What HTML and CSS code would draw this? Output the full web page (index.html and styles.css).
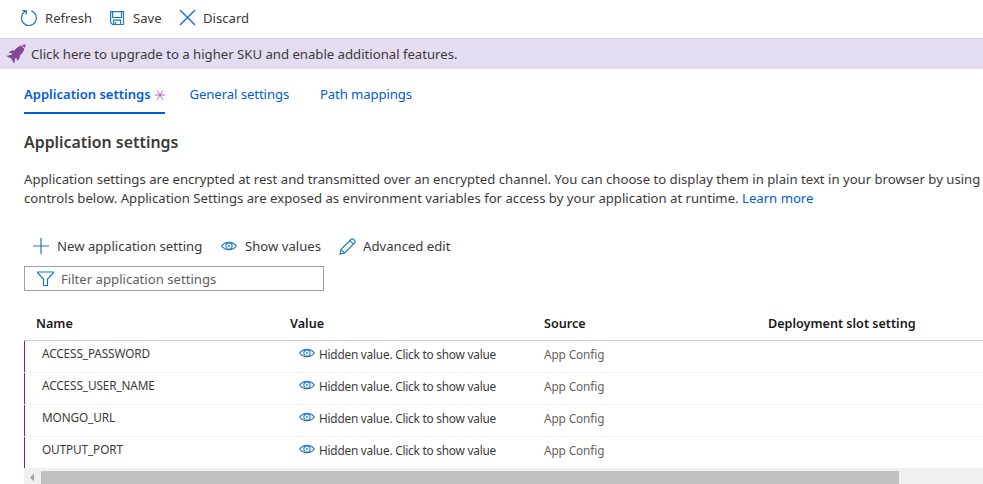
FILE: index.html
```
<!DOCTYPE html>
<html lang="en">
<head>
<meta charset="utf-8">
<title>Application settings</title>
<link rel="stylesheet" href="styles.css">
</head>
<body>
<svg width="0" height="0" class="defs">
  <symbol id="eye" viewBox="0 0 16 10"><path d="M.7 5C2.400 2.500 5 1.300 8 1.300s5.600 1.200 7.300 3.700C13.600 7.500 11 8.700 8 8.700S2.400 7.500 .7 5z" fill="none" stroke="#1f78c8" stroke-width="1.200"/><circle cx="8" cy="5" r="3.100" fill="none" stroke="#1f78c8" stroke-width="1.100"/><circle cx="8" cy="5" r=".9" fill="#1f78c8"/></symbol>
</svg>
<header class="toolbar">
  <button class="cmd refresh"><svg width="18" height="18" viewBox="0 0 18 18" fill="none" stroke="#1f78c8" stroke-width="1.200"><path d="M11.300 1.900A7.500 7.500 0 1 1 5.600 2.300M2.300 1.700h3.900v3.900"/></svg><span>Refresh</span></button>
  <button class="cmd save"><svg width="16" height="16" viewBox="0 0 16 16" fill="none" stroke="#1f78c8" stroke-width="1.200"><path d="M1.600 1.600h12.900v12.900H3.500l-1.900-1.900zM3.600 1.800v5.700h8.900V1.800M4.600 14.300v-4.200h6.900v4.200M6.500 14v-2"/></svg><span>Save</span></button>
  <button class="cmd discard"><svg width="17" height="17" viewBox="0 0 17 17" fill="none" stroke="#1f78c8" stroke-width="1.500"><path d="M1 1l15 15M16 1L1 16"/></svg><span>Discard</span></button>
</header>
<div class="banner">
  <svg width="20" height="20" viewBox="0 0 20 20" fill="#804998"><path d="M19.800.2l-1 3.900-2.900-2.900zM15.100 1.600l3.300 3.300c-.8 2.400-2.300 4.500-4.500 6.400.2 2.600-.6 4.300-2.700 5.700l-.8-3.300-1.300.8-.7 5.200-2.300-3.500-.7-1.800-1.700-.7L.2 12l5.200-1.300.8-1.300-3.500-.6C4.400 6.700 6.300 6 8.700 6.200c1.900-2.200 4-3.700 6.400-4.600z"/></svg>
  <span>Click here to upgrade to a higher SKU and enable additional features.</span>
</div>
<main>
  <nav class="tabs">
    <a class="tab active"><span>Application settings</span><svg width="10" height="10" viewBox="0 0 10 10" stroke="#a855bd" stroke-width=".9"><path d="M0 5h10M2.200.5l5.600 9M7.800.5l-5.600 9"/></svg></a>
    <a class="tab general">General settings</a>
    <a class="tab paths">Path mappings</a>
  </nav>
  <h1>Application settings</h1>
  <p class="intro"><span class="lead">Application settings are encrypted at rest and transmitted over an encrypted channel. You can choose to display them in plain text in your browser by using</span><br>controls below. Application Settings are exposed as environment variables for access by your application at runtime. <a>Learn more</a></p>
  <div class="actions">
    <button class="cmd new"><svg width="16" height="16" viewBox="0 0 16 16" stroke="#1f78c8" stroke-width="1.200"><path d="M8 0v16M0 8h16"/></svg><span>New application setting</span></button>
    <button class="cmd show"><svg width="16" height="10"><use href="#eye"/></svg><span>Show values</span></button>
    <button class="cmd edit"><svg width="17" height="17" viewBox="0 0 17 17" fill="none" stroke="#1f78c8" stroke-width="1.100"><path d="M.9 16.100l1.200-4.700L12 1.500c1.800-1.800 5.300 1.600 3.500 3.500l-9.900 9.900zM2.100 11.400l3.500 3.500M10.900 2.600l3.500 3.500"/></svg><span>Advanced edit</span></button>
  </div>
  <label class="filter"><svg width="17" height="16" viewBox="0 0 17 16" fill="none" stroke="#0f78d4" stroke-width="1.200"><path d="M.7 1h15.600v1l-5.800 6v6.500h-4V8L.7 2z"/></svg><span>Filter application settings</span></label>
  <section class="table">
    <div class="row head"><b class="first">Name</b><b>Value</b><b>Source</b><b>Deployment slot setting</b></div>
    <div class="row"><span class="name">ACCESS_PASSWORD</span><span class="value"><svg width="16" height="10"><use href="#eye"/></svg><span>Hidden value. Click to show value</span></span><span class="source">App Config</span></div>
    <div class="row"><span class="name">ACCESS_USER_NAME</span><span class="value"><svg width="16" height="10"><use href="#eye"/></svg><span>Hidden value. Click to show value</span></span><span class="source">App Config</span></div>
    <div class="row"><span class="name">MONGO_URL</span><span class="value"><svg width="16" height="10"><use href="#eye"/></svg><span>Hidden value. Click to show value</span></span><span class="source">App Config</span></div>
    <div class="row"><span class="name">OUTPUT_PORT</span><span class="value"><svg width="16" height="10"><use href="#eye"/></svg><span>Hidden value. Click to show value</span></span><span class="source">App Config</span></div>
    <div class="scrollbar"><svg width="17" height="13" viewBox="0 0 17 13"><path d="M10 2.500v8L6 6.500z" fill="#a3a3a3"/></svg><div class="thumb"></div></div>
  </section>
</main>
</body>
</html>
```
FILE: styles.css
```
* { box-sizing: border-box; }
body { margin: 0; width: 983px; height: 484px; overflow: hidden; background: #fff; color: #3b3a39; font: 13.15px/19px "Noto Sans", "Open Sans", sans-serif; white-space: nowrap; }
svg { display: block; flex: none; }
.defs { position: absolute; }
button { border: 0; padding: 0; background: none; font: inherit; color: inherit; }
.cmd { display: flex; align-items: center; }
.toolbar { display: flex; height: 39px; padding: 0 0 3px 20px; border-bottom: 1px solid #d2d0d2; }
.toolbar span { padding-top: 1px; }
.cmd.refresh { width: 89px; gap: 7px; }
.cmd.save { width: 70px; gap: 8px; }
.cmd.discard { gap: 7px; }
.banner { display: flex; align-items: center; gap: 5px; height: 30px; padding-left: 6px; background: #e6dcf1; }
main { padding-left: 24px; }
.tabs { display: flex; height: 45px; color: #015cda; }
.tab { height: 45px; padding-top: 16px; }
.tab.active { display: flex; align-items: flex-start; justify-content: space-between; width: 141px; margin-right: 24.5px; border-bottom: 2px solid #015cda; font-size: 13.05px; font-weight: 600; }
.tab.active svg { margin-top: 5px; }
.tab.general { width: 130.5px; letter-spacing: -.08px; }
.tab.paths { letter-spacing: -.1px; }
h1 { margin: 17px 0 0; font-size: 15.9px; line-height: 23px; font-weight: 600; }
.intro { margin: 16px 0 0; line-height: 19px; }
.intro a { color: #015cda; }
.actions { display: flex; height: 30px; margin-top: 23px; padding-left: 9px; }
.cmd.new { width: 188px; gap: 8px; }
.cmd.show { width: 118px; gap: 8px; }
.cmd.edit { gap: 7px; }
.filter { display: flex; align-items: center; gap: 7px; width: 300px; height: 25px; margin-top: 5px; padding-left: 12px; border: 1px solid #a19f9d; color: #605e5c; }
.filter span { padding-top: 2px; }
.table { margin-top: 14px; }
.row { display: grid; grid-template-columns: 266px 254px 224px 1fr; height: 32px; font-size: 11.8px; border-bottom: 1px solid #f3f2f1; }
.row.head { height: 36px; padding-top: 9px; font-size: 12.6px; color: #1b1a19; border-color: #c8cddb; }
.row b { font-weight: 600; }
.first { padding-left: 12px; }
.name { border-left: 1px solid #881798; padding: 3px 0 0 17px; margin-right: 12px; letter-spacing: -.12px; }
.value { display: flex; align-items: flex-start; gap: 4px; padding: 4px 0 0 9px; letter-spacing: -.21px; }
.value svg { margin-top: 3px; }
.source { padding-top: 4px; color: #666462; letter-spacing: -.1px; }
.scrollbar { display: flex; height: 16px; background: #f0f0f0; padding-top: 2px; }
.thumb { width: 858px; background: #c1c1c1; }
```
